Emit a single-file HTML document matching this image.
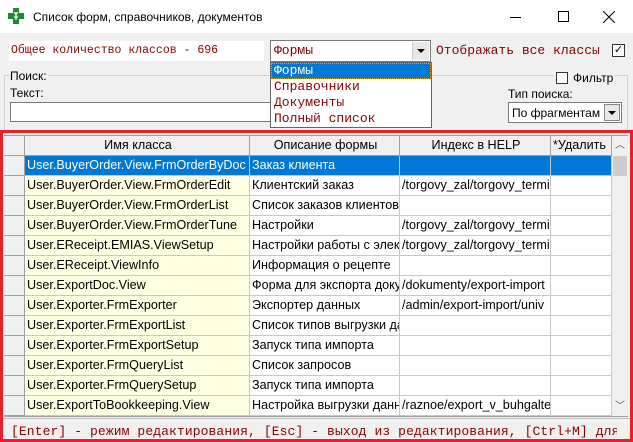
<!DOCTYPE html>
<html><head><meta charset="utf-8"><style>
*{box-sizing:border-box;margin:0;padding:0}
body{width:633px;height:442px;overflow:hidden;background:#f0f0f0;font-family:"Liberation Sans",sans-serif;font-size:12px;color:#000;position:relative}
.a{position:absolute}
.mono{font-family:"Liberation Mono",monospace;font-size:13px;color:#8b0000;white-space:nowrap}
.row{position:absolute;left:4px;height:20px;width:608px;font-size:12.6px}
.row div{position:absolute;top:0;height:20px;line-height:19px;white-space:nowrap;overflow:hidden;border-right:1px solid #c8c8c8;border-bottom:1px solid #c8c8c8;padding-left:2px}
</style></head><body>
<div class="a" style="left:0;top:0;width:633px;height:33px;background:#fff"></div>
<svg class="a" style="left:8px;top:8px" width="16" height="16"><path d="M5 0h6v5h5v6h-5v5H5v-5H0V5h5z" fill="#1e8a2e"/><path d="M6 5h4M8 5v7M6 9h4" stroke="#fff" stroke-width="1.5"/></svg>
<div class="a" style="left:33px;top:10px;font-size:12px">Список форм, справочников, документов</div>
<div class="a" style="left:510px;top:17px;width:11px;height:1px;background:#000"></div>
<div class="a" style="left:558px;top:11px;width:11px;height:11px;border:1px solid #000"></div>
<svg class="a" style="left:603px;top:11px" width="12" height="12"><path d="M0 0L12 12M12 0L0 12" stroke="#000"/></svg>

<div class="a mono" style="left:9px;top:41px;width:255px;height:20px;background:#fff;line-height:20px;padding-left:2px;font-size:11.5px">Общее количество классов - 696</div>
<div class="a" style="left:270px;top:40px;width:161px;height:22px;border:1px solid #7a7a7a;background:#fff"></div>
<div class="a mono" style="left:274px;top:43px">Формы</div>
<div class="a" style="left:412px;top:42px;width:17px;height:18px;background:#e8e8e8;border-left:1px solid #ccc"></div>
<div class="a" style="left:417px;top:49px;border:4px solid transparent;border-top:4px solid #000;border-bottom:0"></div>
<div class="a mono" style="left:436px;top:43px">Отображать все классы</div>
<div class="a" style="left:612px;top:44px;width:13px;height:13px;border:1px solid #333;background:#fff;font-size:11px;line-height:11px;text-align:center">✓</div>

<div class="a" style="left:4px;top:75px;width:624px;height:56px;border:1px solid #d0d0d0"></div>
<div class="a" style="left:9px;top:69px;background:#f0f0f0;padding:0 1px">Поиск:</div>
<div class="a" style="left:554px;top:71px;width:18px;height:14px;background:#f0f0f0"></div>
<div class="a" style="left:556px;top:72px;width:12px;height:12px;border:1px solid #333;background:#fff"></div>
<div class="a" style="left:571px;top:71px;background:#f0f0f0;padding:0 2px">Фильтр</div>
<div class="a" style="left:10px;top:86px">Текст:</div>
<div class="a" style="left:10px;top:102px;width:403px;height:20px;border:1px solid #7a7a7a;background:#fff"></div>
<div class="a" style="left:508px;top:87px">Тип поиска:</div>
<div class="a" style="left:508px;top:102px;width:114px;height:21px;border:1px solid #7a7a7a;background:#fff"></div>
<div class="a" style="left:512px;top:106px">По фрагментам</div>
<div class="a" style="left:604px;top:104px;width:16px;height:17px;background:#e8e8e8;border:1px solid #888"></div>
<div class="a" style="left:608px;top:111px;border:4px solid transparent;border-top:4px solid #000;border-bottom:0"></div>

<div class="a" style="left:0;top:130px;width:633px;height:312px;border:3px solid #e8202a;background:#f0f0f0"></div>
<div class="a" style="left:4px;top:135px;width:624px;height:282px;background:#fff;border:1px solid #a0a0a0"></div>
<div class="row" style="top:136px;background:#f0f0f0">
<div style="left:0;width:21px;border-color:#a0a0a0"></div>
<div style="left:21px;width:225px;text-align:center;border-color:#a0a0a0">Имя класса</div>
<div style="left:246px;width:150px;text-align:center;border-color:#a0a0a0">Описание формы</div>
<div style="left:396px;width:151px;text-align:center;border-color:#a0a0a0">Индекс в HELP</div>
<div style="left:547px;width:61px;border-color:#a0a0a0">*Удалить</div>
</div>
<div id="rows"></div>
<div class="a" style="left:612px;top:156px;width:16px;height:260px;background:#f0f0f0"></div>
<div class="a" style="left:612px;top:136px;width:16px;height:20px;background:#f0f0f0;text-align:center;font-size:10px;line-height:20px;color:#555">︿</div>
<div class="a" style="left:613px;top:156px;width:14px;height:20px;background:#cdcdcd"></div>
<div class="a" style="left:612px;top:397px;width:16px;height:20px;text-align:center;font-size:10px;line-height:20px;color:#555">﹀</div>
<div class="a" style="left:3px;top:418px;width:627px;height:1px;background:#c0c0c0"></div>
<div class="a mono" style="left:11px;top:424px;width:606px;overflow:hidden;white-space:nowrap;letter-spacing:0.1px">[Enter] - режим редактирования, [Esc] - выход из редактирования, [Ctrl+M] для</div>
<script>
var d=[["User.BuyerOrder.View.FrmOrderByDoc","Заказ клиента",""],
["User.BuyerOrder.View.FrmOrderEdit","Клиентский заказ","/torgovy_zal/torgovy_terminal"],
["User.BuyerOrder.View.FrmOrderList","Список заказов клиентов",""],
["User.BuyerOrder.View.FrmOrderTune","Настройки","/torgovy_zal/torgovy_terminal"],
["User.EReceipt.EMIAS.ViewSetup","Настройки работы с электр","/torgovy_zal/torgovy_terminal"],
["User.EReceipt.ViewInfo","Информация о рецепте",""],
["User.ExportDoc.View","Форма для экспорта докум","/dokumenty/export-import"],
["User.Exporter.FrmExporter","Экспортер данных","/admin/export-import/univ"],
["User.Exporter.FrmExportList","Список типов выгрузки да",""],
["User.Exporter.FrmExportSetup","Запуск типа импорта",""],
["User.Exporter.FrmQueryList","Список запросов",""],
["User.Exporter.FrmQuerySetup","Запуск типа импорта",""],
["User.ExportToBookkeeping.View","Настройка выгрузки данны","/raznoe/export_v_buhgalteriyu"]];
var h="";d.forEach(function(r,i){var s=i==0;var y=156+i*20;
h+='<div class="row" style="top:'+y+'px"><div style="left:0;width:21px;background:#f0f0f0;border-color:#a0a0a0"></div>'+
'<div style="left:21px;width:225px;background:'+(s?'#0078d7':'#ffffe1')+';color:'+(s?'#fff':'#000')+'">'+r[0]+'</div>'+
'<div style="left:246px;width:150px;background:'+(s?'#0078d7':'#fff')+';color:'+(s?'#fff':'#000')+'">'+r[1]+'</div>'+
'<div style="left:396px;width:151px;background:'+(s?'#0078d7':'#fff')+'">'+r[2]+'</div>'+
'<div style="left:547px;width:61px;background:'+(s?'#0078d7':'#fff')+'"></div></div>';});
document.getElementById('rows').innerHTML=h;
</script>
<div class="a" style="left:270px;top:62px;width:162px;height:66px;border:1px solid #646464;background:#fff"></div>
<div class="a mono" style="left:271px;top:63px;width:160px;height:16px;background:#0078d7;color:#fff;line-height:16px;padding-left:3px;outline:1px dotted #f0a000;outline-offset:-1px">Формы</div>
<div class="a mono" style="left:274px;top:79px;line-height:16px">Справочники<br>Документы<br>Полный список</div>
</body></html>
